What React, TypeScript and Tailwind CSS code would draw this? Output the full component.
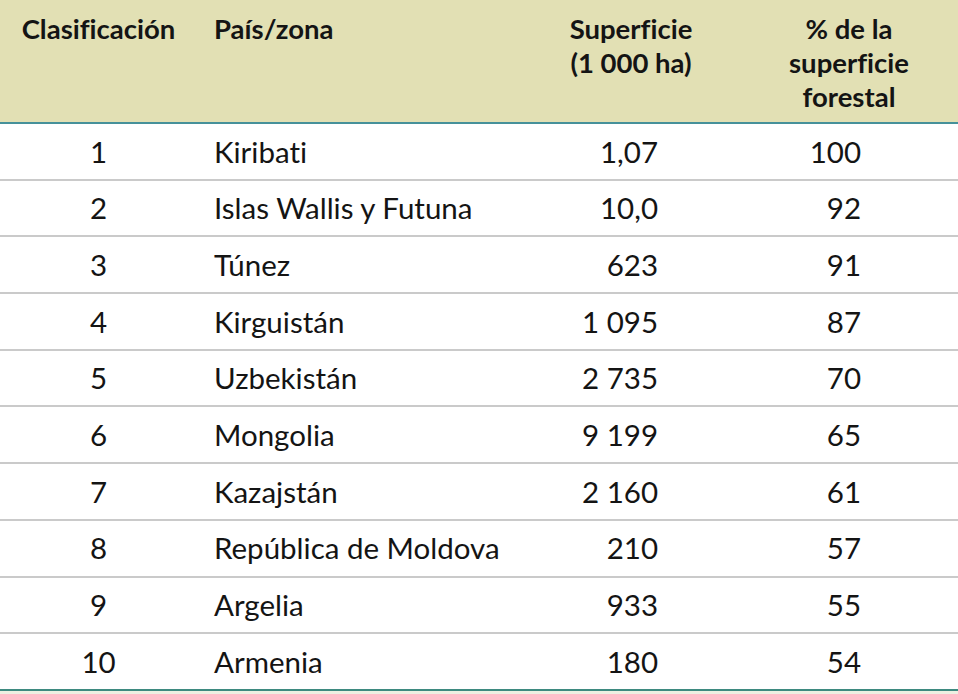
import React from "react";

const rows: [string, string, string, string][] = [
  ["1", "Kiribati", "1,07", "100"],
  ["2", "Islas Wallis y Futuna", "10,0", "92"],
  ["3", "Túnez", "623", "91"],
  ["4", "Kirguistán", "1 095", "87"],
  ["5", "Uzbekistán", "2 735", "70"],
  ["6", "Mongolia", "9 199", "65"],
  ["7", "Kazajstán", "2 160", "61"],
  ["8", "República de Moldova", "210", "57"],
  ["9", "Argelia", "933", "55"],
  ["10", "Armenia", "180", "54"],
];

export default function App() {
  return (
    <div
      className="w-[958px] h-[694px] bg-white text-[#141414] overflow-hidden [font-variant-ligatures:none]"
      style={{ fontFamily: "Lato, 'Noto Sans', sans-serif" }}
    >
      <div className="grid grid-cols-[197px_325px_218px_218px] h-[124px] bg-[#e2e0b4] border-b-[2px] border-[#46919a] text-[27.5px] font-bold leading-[34px]">
        <div className="pt-[12px] text-center">Clasificación</div>
        <div className="pt-[12px] pl-[17px]">País/zona</div>
        <div className="pt-[12px] text-center">
          Superficie
          <br />
          (1&nbsp;000 ha)
        </div>
        <div className="pt-[12px] text-center">
          % de la
          <br />
          superficie
          <br />
          forestal
        </div>
      </div>
      {rows.map((r, i) => (
        <div
          key={i}
          className={
            "grid grid-cols-[197px_325px_218px_218px] h-[56.7px] items-center text-[29.5px] leading-none border-b-[2px] " +
            (i === rows.length - 1 ? "border-[#3e8a80]" : "border-[#cacaca]")
          }
        >
          <div className="text-center">{r[0]}</div>
          <div className="pl-[17px] whitespace-nowrap">{r[1]}</div>
          <div className="text-right pr-[82px]">{r[2]}</div>
          <div className="text-right pr-[97px]">{r[3]}</div>
        </div>
      ))}
      <div className="h-[4px] bg-[#eef0e2]" />
    </div>
  );
}
